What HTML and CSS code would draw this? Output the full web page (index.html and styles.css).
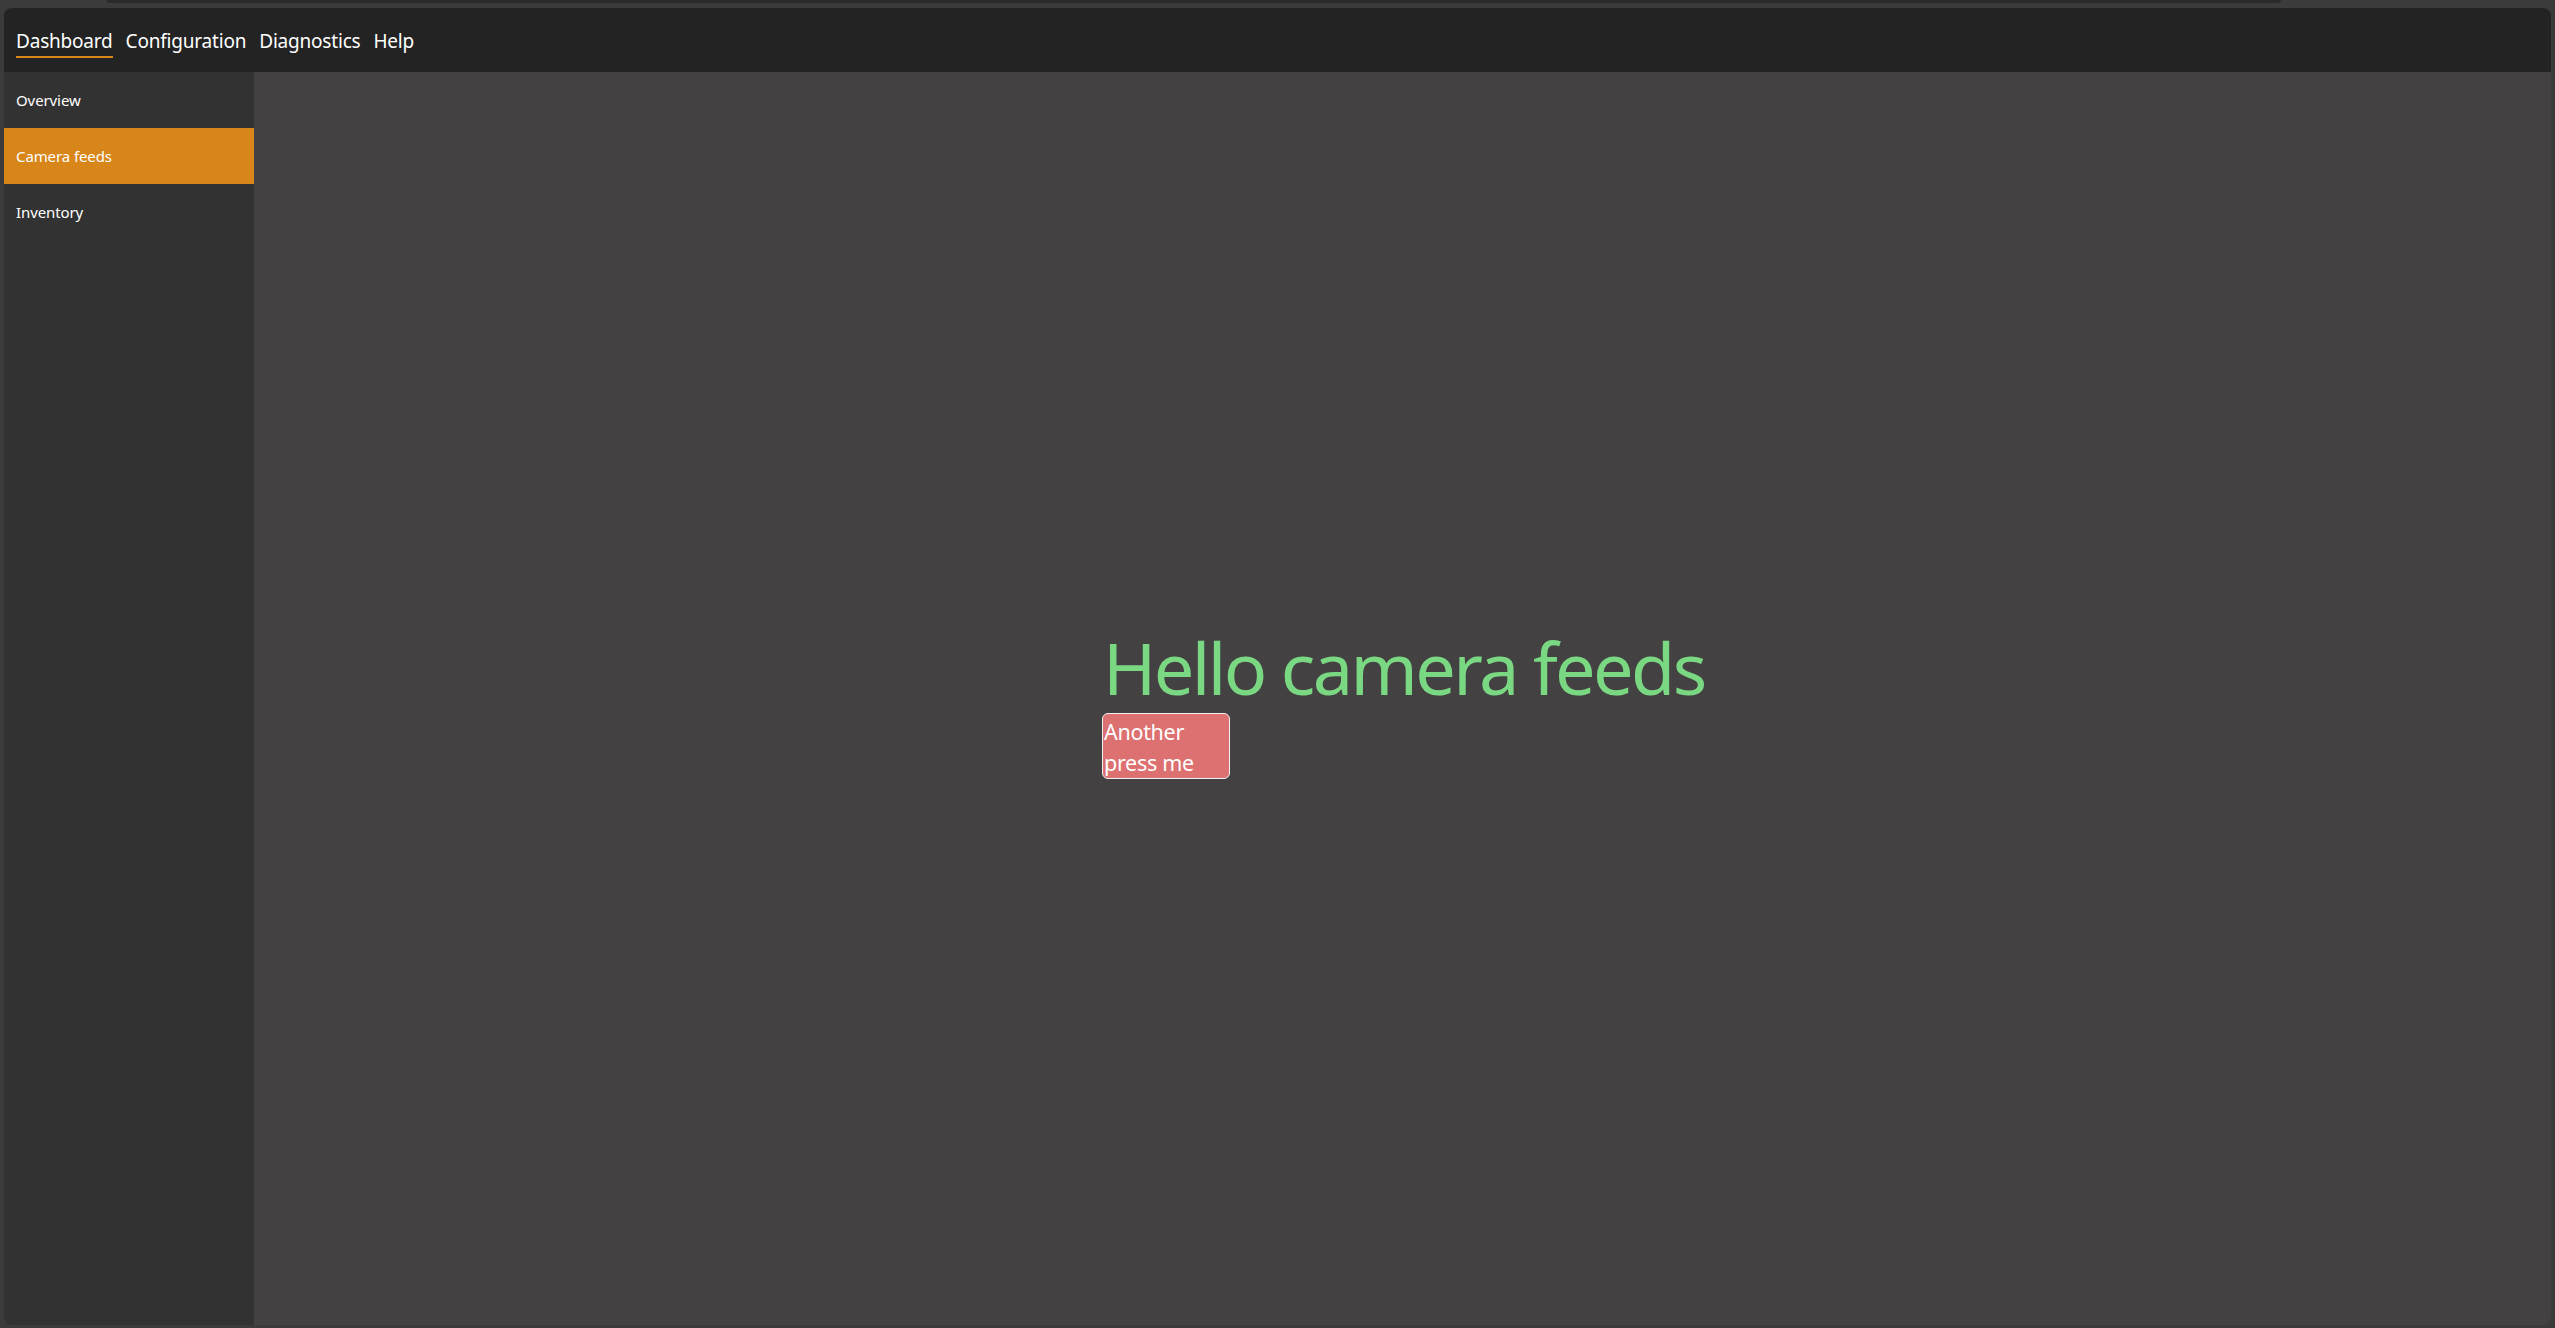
FILE: index.html
```html
<!DOCTYPE html>
<html lang="en">
<head>
<meta charset="utf-8">
<title>Dashboard</title>
<link rel="stylesheet" href="styles.css">
</head>
<body>
<div class="chrome">
  <div class="chrome-tab"></div>
</div>
<div class="window">
  <header class="topbar">
    <nav class="menu">
      <span class="menu-item active">Dashboard</span>
      <span class="menu-item">Configuration</span>
      <span class="menu-item">Diagnostics</span>
      <span class="menu-item">Help</span>
    </nav>
  </header>
  <div class="body">
    <aside class="sidebar">
      <div class="side-item">Overview</div>
      <div class="side-item selected">Camera feeds</div>
      <div class="side-item">Inventory</div>
    </aside>
    <main class="content">
      <div class="panel">
        <h1 class="hello">Hello camera feeds</h1>
        <button class="press">Another press me</button>
      </div>
    </main>
  </div>
</div>
</body>
</html>
```

FILE: styles.css
```css
* { box-sizing: border-box; }
html, body {
  margin: 0;
  padding: 0;
  width: 2555px;
  height: 1328px;
  overflow: hidden;
  background: #3b3b3b;
  font-family: "Noto Sans", "Open Sans", sans-serif;
  color: #ffffff;
}
.chrome {
  height: 8px;
  padding-left: 107px;
  padding-right: 274px;
}
.chrome-tab {
  height: 3px;
  background: #2a2a2a;
  border-radius: 0 0 4px 4px;
}
.window {
  margin-left: 4px;
  width: 2547px;
  height: 1317px;
  border-radius: 8px;
  overflow: hidden;
  display: flex;
  flex-direction: column;
  background: #434142;
}
.topbar {
  height: 64px;
  background: #232323;
  display: flex;
  align-items: flex-start;
  padding-left: 12px;
  padding-top: 22px;
  flex-shrink: 0;
}
.menu {
  display: flex;
  gap: 13px;
}
.menu-item {
  font-size: 19px;
  line-height: 22px;
  padding-bottom: 4px;
  letter-spacing: -0.2px;
  border-bottom: 2px solid transparent;
}
.menu-item.active {
  border-bottom-color: #d8861a;
}
.body {
  flex: 1;
  display: flex;
  min-height: 0;
}
.sidebar {
  width: 250px;
  background: #323232;
  display: flex;
  flex-direction: column;
  flex-shrink: 0;
}
.side-item {
  height: 56px;
  display: flex;
  align-items: center;
  padding-left: 12px;
  font-size: 15px;
  letter-spacing: -0.1px;
}
.side-item.selected {
  background: #d8861a;
}
.content {
  flex: 1;
  display: flex;
  align-items: center;
  padding-left: 848px;
  padding-top: 3px;
}
.panel {
  display: flex;
  flex-direction: column;
  align-items: flex-start;
}
.hello {
  margin: 0;
  font-weight: 400;
  font-size: 72px;
  line-height: 92px;
  color: #7bd882;
  letter-spacing: -2.6px;
  padding-left: 1px;
  white-space: nowrap;
}
.press {
  width: 128px;
  height: 66px;
  margin: 0;
  padding: 2px 0 0 1px;
  background: #dd7070;
  border: 1px solid #f2f2f2;
  border-radius: 6px;
  color: #ffffff;
  font-family: "Noto Sans", "Open Sans", sans-serif;
  font-size: 21.5px;
  line-height: 31px;
  text-align: left;
  letter-spacing: -0.3px;
  display: flex;
  flex-direction: column;
  justify-content: flex-start;
}
```
